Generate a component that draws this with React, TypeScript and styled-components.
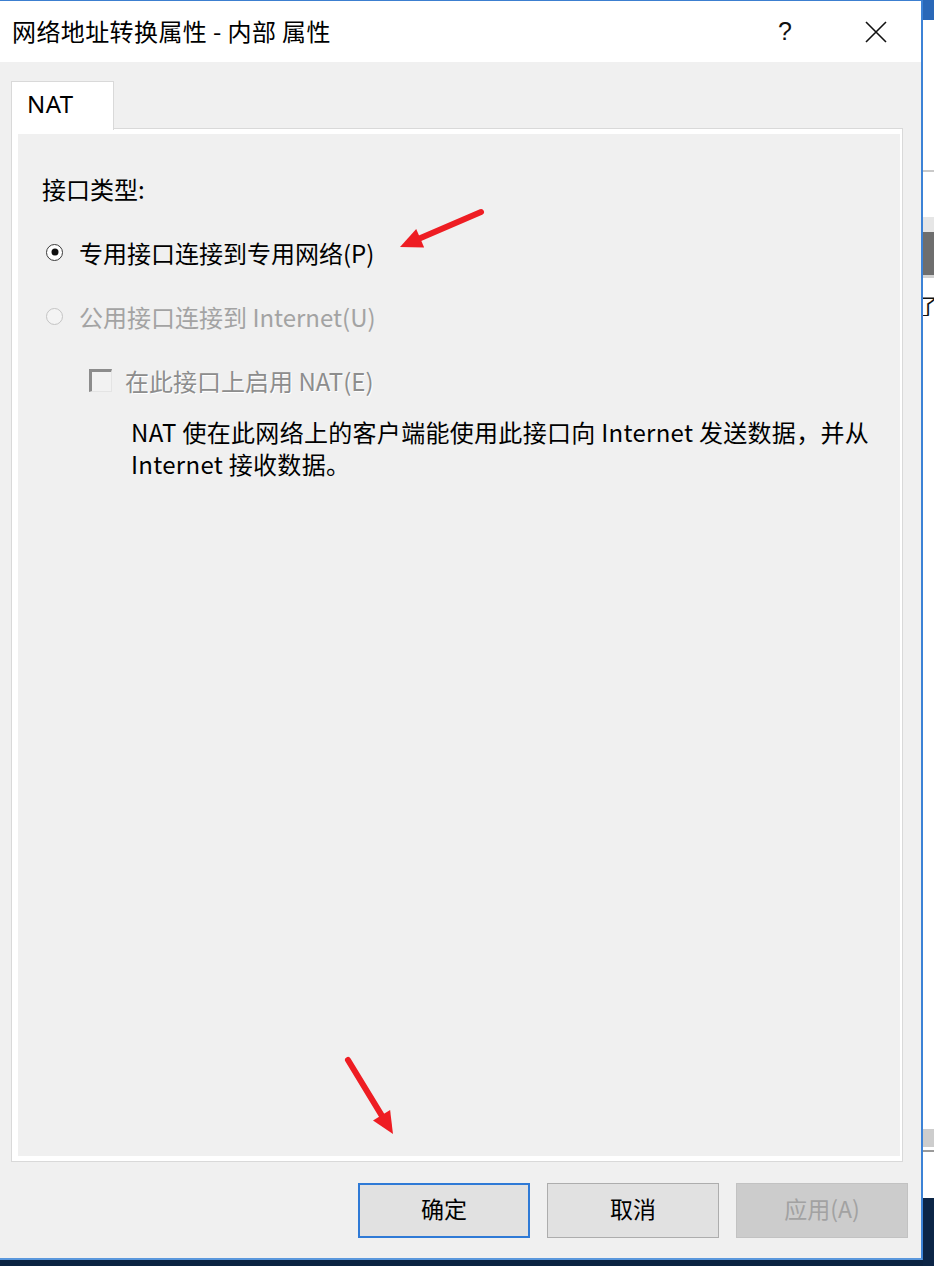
import styled, { createGlobalStyle } from "styled-components";

const GlobalStyle = createGlobalStyle`
    html, body {
        margin: 0;
        padding: 0;
        overflow: hidden;
    }

    body {
        font-family: "Noto Sans CJK SC", "Noto Sans", sans-serif;
        color: #000;
    }
`;

type Point = { x: number; y: number };

// red annotation arrows drawn over the screenshot
function Arrow({ from, to }: { from: Point; to: Point }) {
    const dx = to.x - from.x;
    const dy = to.y - from.y;
    const len = Math.hypot(dx, dy);
    const ux = dx / len;
    const uy = dy / len;
    const headLen = 22;
    const headHalf = 10;
    const bx = to.x - ux * headLen;
    const by = to.y - uy * headLen;
    const p1 = `${bx - uy * headHalf},${by + ux * headHalf}`;
    const p2 = `${bx + uy * headHalf},${by - ux * headHalf}`;

    return (
        <g>
            <line
                x1={from.x}
                y1={from.y}
                x2={bx + ux * 4}
                y2={by + uy * 4}
                stroke="#ee1d23"
                strokeWidth={6}
                strokeLinecap="round"
            />
            <polygon points={`${to.x},${to.y} ${p1} ${p2}`} fill="#ee1d23" />
        </g>
    );
}

function App() {
    return (
        <>
            <GlobalStyle />
            <Screen>
                <Window>
                    <TitleBar>
                        <TitleText>网络地址转换属性 - 内部 属性</TitleText>
                        <TitleButtons>
                            <HelpButton>?</HelpButton>
                            <CloseButton>
                                <svg width="22" height="22" viewBox="0 0 22 22">
                                    <path
                                        d="M1 1 L21 21 M21 1 L1 21"
                                        stroke="#111"
                                        strokeWidth="1.6"
                                        fill="none"
                                    />
                                </svg>
                            </CloseButton>
                        </TitleButtons>
                    </TitleBar>

                    <DialogBody>
                        <TabStrip>
                            <Tab>NAT</Tab>
                        </TabStrip>
                        <Panel>
                            <SectionLabel>接口类型:</SectionLabel>

                            <OptionRow>
                                <RadioMark checked />
                                <OptionText>专用接口连接到专用网络(P)</OptionText>
                            </OptionRow>

                            <OptionRow>
                                <RadioMark disabled />
                                <OptionText disabled>公用接口连接到 Internet(U)</OptionText>
                            </OptionRow>

                            <CheckRow>
                                <CheckMark />
                                <OptionText disabled embossed>
                                    在此接口上启用 NAT(E)
                                </OptionText>
                            </CheckRow>

                            <Description>
                                NAT 使在此网络上的客户端能使用此接口向 Internet 发送数据，并从
                                <br />
                                Internet 接收数据。
                            </Description>
                        </Panel>

                        <ButtonRow>
                            <DialogButton variant="default">确定</DialogButton>
                            <DialogButton>取消</DialogButton>
                            <DialogButton variant="disabled">应用(A)</DialogButton>
                        </ButtonRow>
                    </DialogBody>
                </Window>

                <Backdrop>
                    <Band h={20} color="#2a68b8" />
                    <Band h={150} color="#ffffff" />
                    <Band h={2} color="#c9c9c9" />
                    <Band h={45} color="#ffffff" />
                    <Band h={15} color="#e6e6e6" />
                    <Band h={43} color="#6e6e6e" />
                    <Band h={3} color="#d2d2d2" />
                    <Band h={14} color="#ffffff" />
                    <PeekGlyph>了</PeekGlyph>
                    <Band h={813} color="#ffffff" />
                    <Band h={18} color="#cdcdcd" />
                    <Band h={3} color="#ffffff" />
                    <Band h={2} color="#9a9a9a" />
                    <Band h={46} color="#ffffff" />
                    <Band grow color="#0c2546" />
                </Backdrop>

                <Annotations width="934" height="1266">
                    <Arrow from={{ x: 481, y: 212 }} to={{ x: 400, y: 247 }} />
                    <Arrow from={{ x: 348, y: 1060 }} to={{ x: 393, y: 1134 }} />
                </Annotations>
            </Screen>
        </>
    );
}

const Screen = styled.div`
    position: relative;
    width: 934px;
    height: 1266px;
    display: flex;
    align-items: flex-start;
    background: #0b2342;
    overflow: hidden;
`;

const Window = styled.div`
    width: 921px;
    height: 1257px;
    display: flex;
    flex-direction: column;
    border-top: 1px solid #3c7fd0;
    border-right: 2px solid #3c82d6;
    border-bottom: 2px solid #5a97dc;
    background: #f0f0f0;
    flex-shrink: 0;
`;

const TitleBar = styled.div`
    height: 61px;
    display: flex;
    align-items: center;
    justify-content: space-between;
    padding-left: 12px;
    background: #ffffff;
`;

const TitleText = styled.div`
    font-size: 24px;
    color: #000;
    letter-spacing: 0.4px;
    margin-top: -2px;
`;

const TitleButtons = styled.div`
    display: flex;
    align-items: center;
    height: 100%;
`;

const HelpButton = styled.div`
    width: 92px;
    text-align: center;
    font-family: "Liberation Sans", "Noto Sans", sans-serif;
    font-size: 25px;
    color: #111;
`;

const CloseButton = styled.div`
    width: 90px;
    display: flex;
    justify-content: center;
    align-items: center;
`;

const DialogBody = styled.div`
    flex: 1;
    display: flex;
    flex-direction: column;
    padding: 19px 18px 0 11px;
`;

const TabStrip = styled.div`
    display: flex;
    height: 48px;
`;

const Tab = styled.div`
    position: relative;
    z-index: 1;
    width: 103px;
    height: 49px;
    box-sizing: border-box;
    padding: 5px 0 0 15px;
    border: 1px solid #d9d9d9;
    border-bottom: none;
    background: #ffffff;
    font-family: "Noto Sans", "Noto Sans CJK SC", sans-serif;
    font-size: 24px;
    letter-spacing: 0.4px;
`;

const Panel = styled.div`
    flex: 1;
    margin-top: -1px;
    border: 1px solid #d9d9d9;
    box-shadow: inset 6px 5px 0 #ffffff, inset -2px -5px 0 #ffffff;
    padding: 44px 24px 0 30px;
    display: flex;
    flex-direction: column;
`;

const SectionLabel = styled.div`
    height: 32px;
    line-height: 32px;
    font-size: 24px;
    margin-bottom: 31px;
`;

const OptionRow = styled.div`
    display: flex;
    align-items: center;
    height: 32px;
    margin-bottom: 32px;
`;

const CheckRow = styled(OptionRow)`
    padding-left: 47px;
    margin-bottom: 20px;
`;

const RadioMark = styled.span<{ checked?: boolean; disabled?: boolean }>`
    position: relative;
    width: 15px;
    height: 15px;
    margin: 0 16px 0 4px;
    border-radius: 50%;
    border: 1px solid ${(p) => (p.disabled ? "#c4c4c4" : "#3a3a3a")};
    background: ${(p) => (p.disabled ? "#f4f4f4" : "#ffffff")};
    flex-shrink: 0;

    &::after {
        content: "";
        display: ${(p) => (p.checked ? "block" : "none")};
        position: absolute;
        left: 50%;
        top: 50%;
        width: 7px;
        height: 7px;
        border-radius: 50%;
        background: #111;
        transform: translate(-50%, -50%);
    }
`;

const CheckMark = styled.span`
    width: 19px;
    height: 19px;
    margin-right: 13px;
    border-top: 3px solid #8c8c8c;
    border-left: 3px solid #8c8c8c;
    border-right: 1px solid #e4e4e4;
    border-bottom: 1px solid #e4e4e4;
    background: #f2f2f2;
    flex-shrink: 0;
`;

const OptionText = styled.span<{ disabled?: boolean; embossed?: boolean }>`
    font-size: 24px;
    color: ${(p) => (p.embossed ? "#8d8d8d" : p.disabled ? "#a3a3a3" : "#000")};
    text-shadow: ${(p) => (p.embossed ? "1px 1px 0 #ffffff" : "none")};
    white-space: nowrap;
`;

const Description = styled.div`
    padding-left: 89px;
    font-size: 24px;
    line-height: 32px;
    color: #000;
    white-space: nowrap;
    letter-spacing: 0.3px;
`;

const ButtonRow = styled.div`
    display: flex;
    justify-content: flex-end;
    gap: 17px;
    margin: 21px -5px 20px 0;
    height: 55px;
`;

type ButtonVariant = "default" | "normal" | "disabled";

const DialogButton = styled.div<{ variant?: ButtonVariant }>`
    width: 172px;
    box-sizing: border-box;
    display: flex;
    align-items: center;
    justify-content: center;
    padding-bottom: 5px;
    font-size: 23px;
    background: ${(p) => (p.variant === "disabled" ? "#cccccc" : "#e1e1e1")};
    color: ${(p) => (p.variant === "disabled" ? "#a2a2a2" : "#000")};
    border: ${(p) =>
        p.variant === "default"
            ? "2px solid #2f7ad6"
            : p.variant === "disabled"
              ? "1px solid #c2c2c2"
              : "1px solid #adadad"};
`;

const Backdrop = styled.div`
    flex: 1;
    align-self: stretch;
    display: flex;
    flex-direction: column;
    overflow: hidden;
`;

const Band = styled.div<{ h?: number; color: string; grow?: boolean }>`
    height: ${(p) => (p.h ? `${p.h}px` : "auto")};
    flex: ${(p) => (p.grow ? 1 : "none")};
    background: ${(p) => p.color};
`;

const PeekGlyph = styled.div`
    height: 24px;
    line-height: 24px;
    background: #ffffff;
    margin-left: -6px;
    font-size: 22px;
    color: #111;
    white-space: nowrap;
`;

const Annotations = styled.svg`
    position: absolute;
    left: 0;
    top: 0;
    pointer-events: none;
`;

export default App;
